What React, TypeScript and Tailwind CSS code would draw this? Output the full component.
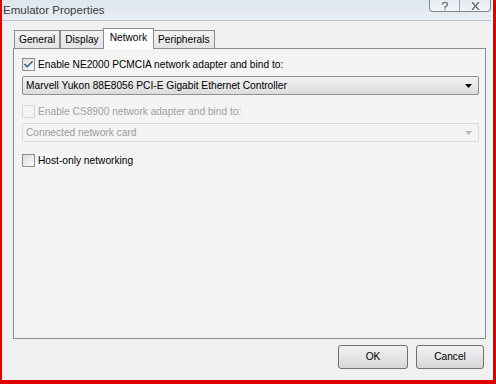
import { Check } from "lucide-react";

const font = { fontFamily: '"Liberation Sans", Arial, sans-serif' };

const Checkbox = ({ checked, disabled, label }: { checked?: boolean; disabled?: boolean; label: string }) => (
  <label className="flex items-center gap-[3px] h-[13px]">
    <span
      className={`w-[13px] h-[13px] border flex items-center justify-center ${
        disabled ? "border-[#d8d8d8] bg-[#f4f4f4]" : "border-[#8f8f8f] bg-gradient-to-br from-[#dcdcdc] to-[#fafafa]"
      }`}
    >
      {checked && <Check className="w-[11px] h-[11px] text-[#3c5d8c]" strokeWidth={3.5} />}
    </span>
    <span className={disabled ? "text-[#a0a0a0]" : "text-black"}>{label}</span>
  </label>
);

const Select = ({ value, disabled }: { value: string; disabled?: boolean }) => (
  <div
    className={`flex items-center justify-between h-[19px] rounded-[2px] border pl-[3px] pr-[6px] ${
      disabled
        ? "border-[#dadada] bg-[#f4f4f4] text-[#9a9a9a]"
        : "border-[#8e8f8f] bg-gradient-to-b from-[#f2f2f2] to-[#dcdcdc] text-black"
    }`}
  >
    <span>{value}</span>
    <svg width="7" height="4" viewBox="0 0 7 4">
      <path d="M0 0h7L3.5 4z" fill={disabled ? "#b8b8b8" : "#000"} />
    </svg>
  </div>
);

const Tab = ({ label, active }: { label: string; active?: boolean }) => (
  <div
    className={`border border-b-0 border-[#898c95] ${
      active
        ? "bg-white h-[21px] pt-[3px] px-[6px] -mx-[1px] relative z-10 -mb-[1px]"
        : "bg-gradient-to-b from-[#f2f2f2] to-[#e3e3e3] h-[18px] pt-[3px] px-[4px] mt-[2px]"
    }`}
  >
    {label}
  </div>
);

export default function App() {
  return (
    <div
      className="w-[496px] h-[384px] bg-[#e00000] pl-[2px] pr-[3px] pb-[4px] text-[10.2px] leading-[12px]"
      style={font}
    >
      <div className="w-full h-full bg-[#f0f0f0] flex flex-col border-r-[2px] border-[#f8f8f8]">
        {/* title bar */}
        <div className="h-[21px] bg-gradient-to-b from-[#dde6ee] to-[#e9eef3] border-b border-[#b9c4cf] flex items-start justify-between">
          <span className="text-[11.5px] leading-[14px] text-[#3a3a3a] pl-[1px] pt-[3px]">Emulator Properties</span>
          <div className="flex h-[12px] border border-t-0 border-[#7b848e] rounded-b-[4px] bg-gradient-to-b from-[#e4eaf0] to-[#f2f5f8]">
            <div className="w-[30px] border-r border-[#9aa3ac] flex justify-center items-end">
              <svg width="8" height="9" viewBox="0 0 8 9">
                <path d="M1.5 2.5Q1.5 0.5 4 0.5T6.5 2.5Q6.5 4 4 5V6.5M4 7.5V8.5" stroke="#666" fill="none" strokeWidth="1.2" />
              </svg>
            </div>
            <div className="w-[30px] flex justify-center items-end pb-[1px]">
              <svg width="9" height="8" viewBox="0 0 9 8">
                <path d="M1 0L8 8M8 0L1 8" stroke="#666" fill="none" strokeWidth="1.3" />
              </svg>
            </div>
          </div>
        </div>

        <div className="flex-1 flex flex-col pl-[11px] pr-[5px] pt-[7px]">
          {/* tabs */}
          <div className="flex items-end h-[20px] pl-[1px]">
            <Tab label="General" />
            <Tab label="Display" />
            <Tab label="Network" active />
            <Tab label="Peripherals" />
          </div>

          {/* panel */}
          <div className="h-[291px] border border-[#898c95] bg-[#f4f4f4] pl-[8px] pr-[6px] pt-[9px] flex flex-col">
            <Checkbox checked label="Enable NE2000 PCMCIA network adapter and bind to:" />
            <div className="mt-[5px]">
              <Select value="Marvell Yukon 88E8056 PCI-E Gigabit Ethernet Controller" />
            </div>
            <div className="mt-[10px]">
              <Checkbox disabled label="Enable CS8900 network adapter and bind to:" />
            </div>
            <div className="mt-[5px]">
              <Select disabled value="Connected network card" />
            </div>
            <div className="mt-[12px]">
              <Checkbox label="Host-only networking" />
            </div>
          </div>

          {/* buttons */}
          <div className="flex justify-end gap-[8px] mt-[6px] pr-[2px]">
            <button className="w-[70px] h-[24px] rounded-[3px] border border-[#707070] bg-gradient-to-b from-[#f2f2f2] to-[#d6d6d6] text-black">
              OK
            </button>
            <button className="w-[68px] h-[24px] rounded-[3px] border border-[#707070] bg-gradient-to-b from-[#f2f2f2] to-[#d6d6d6] text-black">
              Cancel
            </button>
          </div>
        </div>
      </div>
    </div>
  );
}
